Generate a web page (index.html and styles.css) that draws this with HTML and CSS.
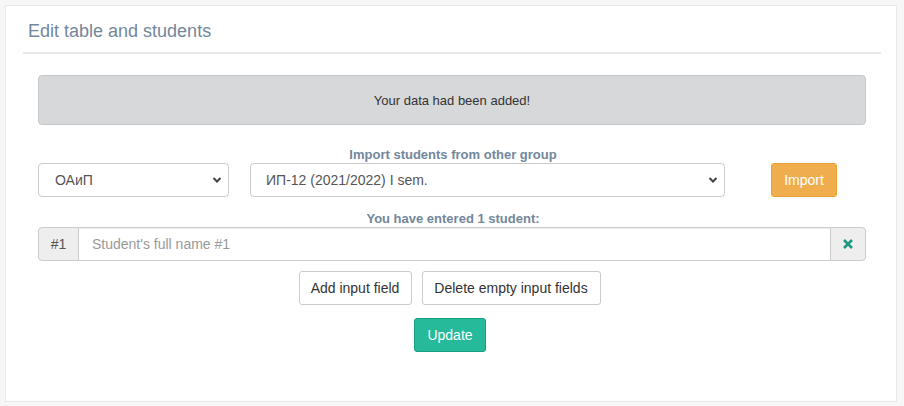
FILE: index.html
```html
<!DOCTYPE html>
<html>
<head>
<meta charset="utf-8">
<link rel="stylesheet" href="styles.css">
</head>
<body>
<div class="panel">
  <div class="panel-title">
    <h2>Edit table and students</h2>
  </div>
  <div class="panel-content">
    <div class="alert">Your data had been added!</div>
    <div class="label">Import students from other group</div>
    <div class="import-row">
      <select class="select subj"><option>ОАиП</option></select>
      <select class="select group"><option>ИП-12 (2021/2022) I sem.</option></select>
      <button class="btn btn-warning">Import</button>
    </div>
    <div class="label">You have entered 1 student:</div>
    <div class="input-group">
      <span class="addon num">#1</span>
      <input class="field" type="text" placeholder="Student's full name #1">
      <span class="addon del">
        <svg width="12" height="12" viewBox="0 0 12 12"><path d="M2 2 L10 10 M10 2 L2 10" stroke="#1f9a80" stroke-width="2.6" stroke-linecap="butt"/></svg>
      </span>
    </div>
    <div class="actions">
      <button class="btn btn-default add">Add input field</button>
      <button class="btn btn-default delete">Delete empty input fields</button>
    </div>
    <div class="actions update">
      <button class="btn btn-success">Update</button>
    </div>
  </div>
</div>
</body>
</html>
```

FILE: styles.css
```css
* { box-sizing: border-box; }
html, body { margin: 0; }
body {
  background: #f7f7f7;
  font-family: "Liberation Sans", Arial, sans-serif;
  font-size: 13px;
  color: #73879c;
  padding: 5px 7px 5px 5px;
}
.panel {
  background: #fff;
  border: 1px solid #e6e9ed;
  height: 397px;
  padding: 10px 15px 0 17px;
}
.panel-title {
  border-bottom: 2px solid #e6e9ed;
  height: 38px;
  padding: 0 0 0 5px;
}
.panel-title h2 {
  margin: 0;
  font-size: 18px;
  font-weight: 400;
  line-height: 28px;
  color: #73879c;
  padding-top: 1px;
}
.panel-content {
  padding: 21px 15px 0 15px;
}
.alert {
  height: 50px;
  background: #d6d8da;
  border: 1px solid #c4c6c8;
  border-radius: 4px;
  color: #333;
  font-size: 13px;
  display: flex;
  align-items: center;
  justify-content: center;
}
.label {
  text-align: center;
  font-weight: 700;
  font-size: 13px;
  color: #73879c;
  line-height: 15px;
  margin-top: 22px;
  padding-left: 2px;
}
.import-row {
  display: flex;
  margin-top: 1px;
  height: 34px;
}
.select {
  appearance: none;
  -webkit-appearance: none;
  height: 34px;
  border: 1px solid #ccc;
  border-radius: 4px;
  background: #fff url("data:image/svg+xml;utf8,<svg xmlns='http://www.w3.org/2000/svg' width='10' height='8' viewBox='0 0 10 8'><path d='M1.5 2 L5 5.5 L8.5 2' fill='none' stroke='%23444' stroke-width='2'/></svg>") no-repeat right 6px center;
  font-family: "Liberation Sans", Arial, sans-serif;
  font-size: 14px;
  color: #555;
  padding: 0 16px;
}
.subj { width: 191px; }
.group { width: 475px; margin-left: 21px; padding-left: 15px; }
.btn {
  font-family: "Liberation Sans", Arial, sans-serif;
  font-size: 14px;
  height: 34px;
  border-radius: 3px;
  border: 1px solid transparent;
  padding: 0;
  cursor: pointer;
}
.btn-warning {
  background: #f0ad4e;
  border-color: #eea236;
  color: #fff;
  margin-left: 46px;
  width: 66px;
}
.import-row + .label { margin-top: 14px; }
.input-group {
  display: flex;
  height: 34px;
  margin-top: 1px;
}
.addon {
  background: #eee;
  border: 1px solid #ccc;
  display: flex;
  align-items: center;
  justify-content: center;
  color: #555;
  font-size: 14px;
}
.num {
  width: 41px;
  border-radius: 4px 0 0 4px;
  border-right: 1px solid #ccc;
}
.field {
  flex: 1;
  height: 34px;
  border: 1px solid #ccc;
  border-left: 0;
  border-right: 0;
  font-family: "Liberation Sans", Arial, sans-serif;
  font-size: 14px;
  padding: 0 13px;
  outline: none;
  box-shadow: inset 0 1px 1px rgba(0,0,0,.075);
}
.field::placeholder { color: #999; }
.del {
  width: 36px;
  border-radius: 0 4px 4px 0;
}
.actions {
  display: flex;
  justify-content: center;
  gap: 10px;
  margin-top: 10px;
  padding-right: 5px;
}
.btn-default {
  background: #fff;
  border-color: #ccc;
  color: #333;
}
.add { width: 113px; }
.delete { width: 179px; }
.update { margin-top: 13px; padding-right: 4px; }
.btn-success {
  background: #26b99a;
  border-color: #169f85;
  color: #fff;
  width: 72px;
}
```
